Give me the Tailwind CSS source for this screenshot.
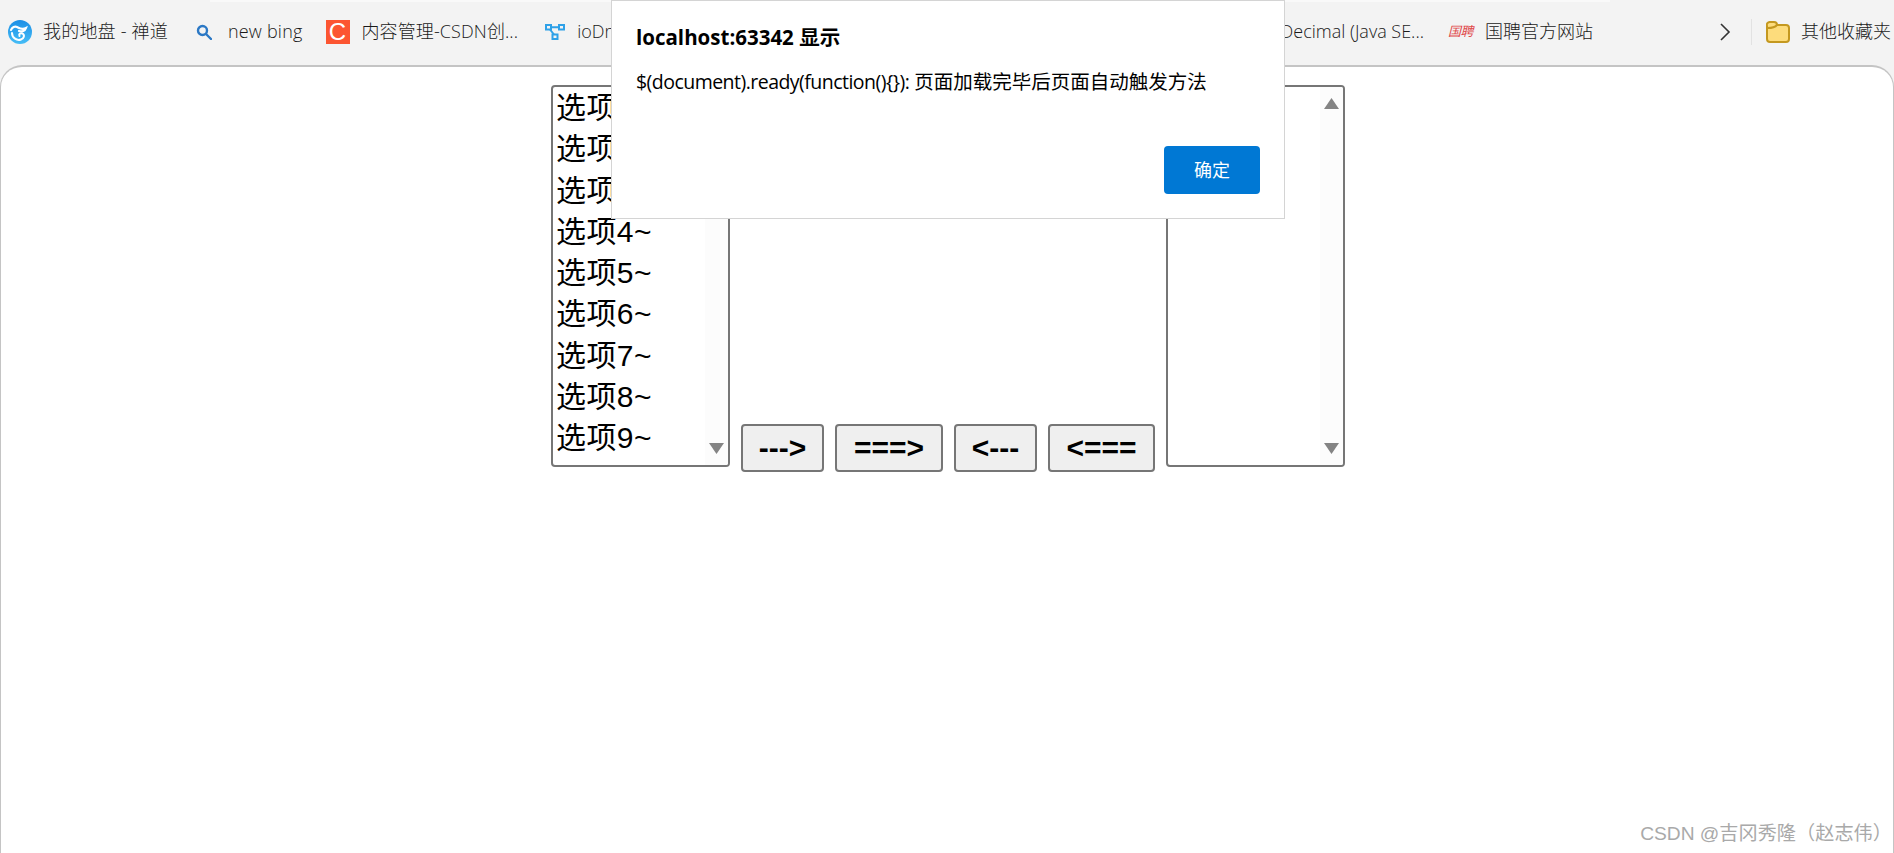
<!DOCTYPE html>
<html lang="en">
  <head>
    <meta charset="UTF-8" />
    <title>Select options</title>
    <script src="https://cdn.jsdelivr.net/npm/@tailwindcss/browser@4"></script>
  </head>
  <body class="relative h-screen w-screen overflow-hidden flex flex-col bg-[#f3f3f3] font-['Liberation_Sans','Noto_Sans_CJK_SC',sans-serif]">
    <div class="absolute left-[210px] top-0 w-[1400px] h-[2px] bg-[#f9f9f9]"></div>

    <!-- favourites bar -->
    <div class="h-[65px] shrink-0 flex items-center pb-[2px] pr-[3px] text-[18px] text-[#1a1a1a] whitespace-nowrap font-['Open_Sans','Noto_Sans_CJK_SC',sans-serif]">
      <div class="flex items-center pl-2">
        <svg class="w-6 h-6" viewBox="0 0 24 24">
          <defs>
            <linearGradient id="zentao" x1="0" y1="0" x2="0" y2="1">
              <stop offset="0" stop-color="#1c8fe6" />
              <stop offset="1" stop-color="#46bdf6" />
            </linearGradient>
          </defs>
          <circle cx="12" cy="12" r="12" fill="url(#zentao)" />
          <path d="M3 10c1-3 4-4 6-3 3 1.500 5 3 9 1-1 3-4 4-7 3" fill="none" stroke="#fff" stroke-width="2.200" stroke-linecap="round" />
          <path d="M4 13c0 5 5 8 9 6.500 3-1 4-4.500 1.500-6-2-1-4 .5-3 2.500" fill="none" stroke="#fff" stroke-width="2" stroke-linecap="round" />
        </svg>
        <span class="ml-[11px] tracking-[0.2px] font-light">我的地盘 - 禅道</span>
      </div>
      <div class="flex items-center ml-[28px]">
        <svg class="w-4 h-4" viewBox="0 0 16 16" fill="none" stroke="#2b78c5" stroke-width="2.400">
          <circle cx="6.500" cy="6.500" r="4.500" />
          <path d="M10 10l5 5" stroke-linecap="round" />
        </svg>
        <span class="ml-4 tracking-[0.2px] font-light">new bing</span>
      </div>
      <div class="flex items-center ml-[23px]">
        <div class="w-6 h-6 bg-[#fc5531] flex items-center justify-center text-white text-[24px] leading-none font-['Liberation_Sans']">C</div>
        <span class="ml-3 tracking-[0.1px] font-light">内容管理-CSDN创...</span>
      </div>
      <div class="flex items-center ml-[27px]">
        <svg class="w-5 h-4" viewBox="0 0 20 16" fill="none" stroke="#2ea1e8" stroke-width="2">
          <rect x="1" y="1" width="5" height="4.500" />
          <rect x="14" y="1" width="5" height="4.500" />
          <rect x="7.500" y="10.500" width="5" height="4.500" />
          <path d="M6 3.200h8M5 5.500l4 5" />
        </svg>
        <span class="ml-3 font-light">ioDraw</span>
      </div>
      <div class="flex-1"></div>
      <div class="flex items-center">
        <span class="font-light">BigDecimal (Java SE...</span>
      </div>
      <div class="flex items-center ml-[24px]">
        <span class="w-[26px] text-[13px] leading-none italic text-[#e0484a] tracking-[-0.500px]">国聘</span>
        <span class="ml-[11px] font-light">国聘官方网站</span>
      </div>
      <svg class="w-[12px] h-[20px] ml-[126px]" viewBox="0 0 12 20" fill="none" stroke="#333" stroke-width="1.600">
        <path d="M2 2l8 8-8 8" />
      </svg>
      <div class="w-px h-[26px] bg-[#e2e2e2] ml-[20px]"></div>
      <svg class="w-6 h-[22px] ml-[14px]" viewBox="0 0 24 22">
        <path d="M1 5a3 3 0 0 1 3-4h4a3 3 0 0 1 3 3h9a3 3 0 0 1 3 3v11a3 3 0 0 1-3 3H4a3 3 0 0 1-3-3z" fill="#fddc7c" stroke="#c4981f" stroke-width="2" />
        <path d="M1.500 7c3 0 7 0 9.500-3" fill="none" stroke="#c4981f" stroke-width="2" />
      </svg>
      <span class="ml-[11px] font-light">其他收藏夹</span>
    </div>

    <!-- page -->
    <main class="relative flex-1 bg-white border border-t-2 border-b-0 border-[#c4c4c4] rounded-t-[22px] pt-[18px] pl-[2px] flex items-start justify-center">
      <div class="flex items-end gap-[11px]">
        <div class="w-[179px] h-[382px] mb-[5px] border-2 border-[#767676] rounded-[4px] flex overflow-hidden bg-white text-[30px] leading-[41.300px] text-black">
          <ul class="flex-1 pl-[3px] tracking-[0.400px]">
            <li>选项1~</li>
            <li>选项2~</li>
            <li>选项3~</li>
            <li>选项4~</li>
            <li>选项5~</li>
            <li>选项6~</li>
            <li>选项7~</li>
            <li>选项8~</li>
            <li>选项9~</li>
          </ul>
          <div class="w-[23px] bg-[#fcfcfc] flex flex-col justify-between items-center pt-[11px] pb-[11px]">
            <svg class="w-[15px] h-[11px]" viewBox="0 0 15 11"><path d="M7.500 0L15 11H0z" fill="#848484" /></svg>
            <svg class="w-[15px] h-[11px]" viewBox="0 0 15 11"><path d="M0 0h15L7.500 11z" fill="#848484" /></svg>
          </div>
        </div>

        <button class="h-[48px] w-[83px] bg-[#efefef] border-2 border-[#767676] rounded-[4px] text-[30px] leading-none font-bold text-black">---&gt;</button>
        <button class="h-[48px] w-[108px] bg-[#efefef] border-2 border-[#767676] rounded-[4px] text-[30px] leading-none font-bold text-black">===&gt;</button>
        <button class="h-[48px] w-[83px] bg-[#efefef] border-2 border-[#767676] rounded-[4px] text-[30px] leading-none font-bold text-black">&lt;---</button>
        <button class="h-[48px] w-[107px] bg-[#efefef] border-2 border-[#767676] rounded-[4px] text-[30px] leading-none font-bold text-black">&lt;===</button>

        <div class="w-[179px] h-[382px] mb-[5px] border-2 border-[#767676] rounded-[4px] flex overflow-hidden bg-white">
          <div class="flex-1"></div>
          <div class="w-[23px] bg-[#fcfcfc] flex flex-col justify-between items-center pt-[11px] pb-[11px]">
            <svg class="w-[15px] h-[11px]" viewBox="0 0 15 11"><path d="M7.500 0L15 11H0z" fill="#848484" /></svg>
            <svg class="w-[15px] h-[11px]" viewBox="0 0 15 11"><path d="M0 0h15L7.500 11z" fill="#848484" /></svg>
          </div>
        </div>
      </div>
      <span class="absolute right-[1px] bottom-[10px] text-[19.200px] leading-none text-[#a9a9a9]">CSDN @吉冈秀隆（赵志伟）</span>
    </main>

    <!-- alert dialog -->
    <div class="absolute left-[611px] top-0 w-[674px] h-[219px] bg-white border border-[#d4d4d4] pl-[24px] pr-[24px] pt-[22px] flex flex-col font-['Open_Sans','Noto_Sans_CJK_SC',sans-serif]">
      <div class="text-[20.500px] leading-[28px] font-bold text-black">localhost:63342 显示</div>
      <div class="mt-[17px] text-[19.500px] leading-[28px] text-black">
        <span class="tracking-[-0.530px]">$(document).ready(function(){}):</span>
        <span>页面加载完毕后页面自动触发方法</span>
      </div>
      <div class="mt-auto mb-[24px] flex justify-end">
        <button class="w-[96px] h-[48px] rounded-[4px] bg-[#0078d4] text-white text-[18px]">确定</button>
      </div>
    </div>
  </body>
</html>
